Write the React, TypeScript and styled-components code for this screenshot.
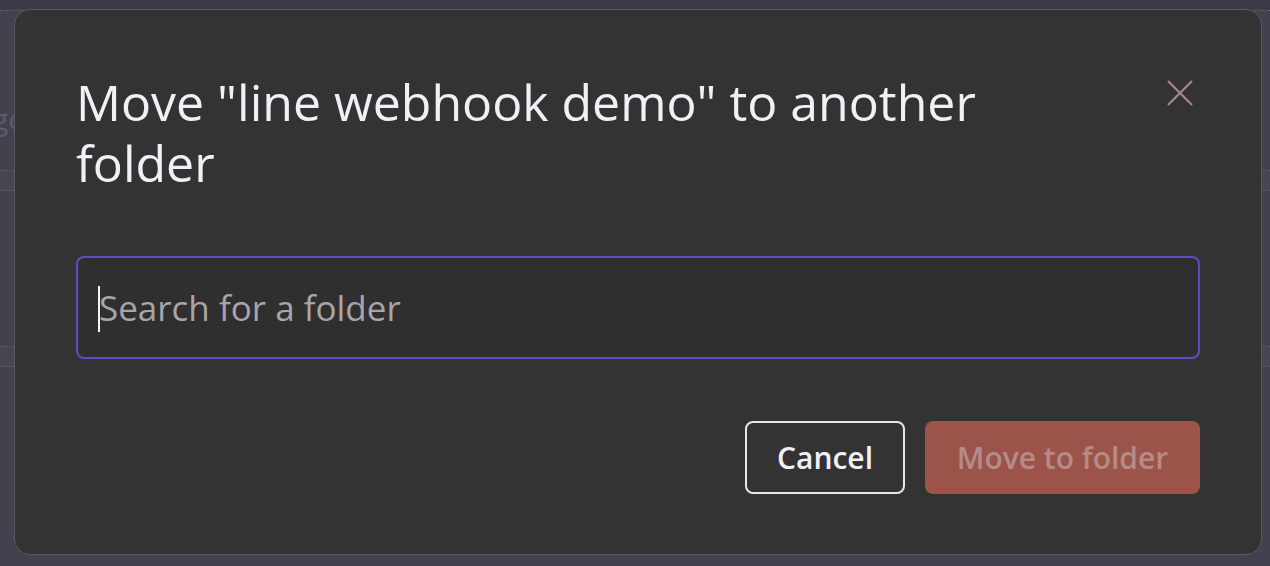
import React from "react";
import styled, { createGlobalStyle } from "styled-components";

const GlobalStyle = createGlobalStyle`
  html, body {
    margin: 0;
    padding: 0;
    width: 100%;
    height: 100%;
    overflow: hidden;
    background: #44414e;
  }
  body {
    font-family: "Open Sans", "Noto Sans", sans-serif;
  }
  * { box-sizing: border-box; }
`;

const Page = styled.div`
  width: 1270px;
  height: 566px;
  display: flex;
  flex-direction: column;
  background: #44414e;
`;

const TopStrip = styled.div`
  height: 11px;
  background: #3e3b48;
  border-bottom: 1px dotted #6a6777;
`;

const BgRow = styled.div<{ $h: number; $band?: boolean }>`
  height: ${(p) => p.$h}px;
  display: flex;
  align-items: center;
  background: ${(p) => (p.$band ? "#484553" : "transparent")};
  border-bottom: 1px dotted #65627a;
`;

const BgText = styled.span`
  margin-left: -8px;
  margin-top: 56px;
  font-size: 30px;
  color: #5d5a69;
`;

const Overlay = styled.div`
  position: fixed;
  inset: 0;
  display: flex;
  align-items: flex-start;
  justify-content: flex-start;
  padding: 9px 8px 11px 14px;
`;

const Modal = styled.div`
  width: 1248px;
  height: 546px;
  background: #333333;
  border: 1px solid #59595e;
  border-radius: 16px;
  padding: 62px 61px 60px 61px;
  display: flex;
  flex-direction: column;
`;

const Header = styled.div`
  display: flex;
  align-items: flex-start;
  justify-content: space-between;
  gap: 40px;
`;

const Title = styled.h2`
  margin: 0;
  font-family: "Open Sans", "Noto Sans", sans-serif;
  font-weight: 400;
  font-size: 50px;
  line-height: 61px;
  color: #f1f0f7;
  max-width: 960px;
`;

const CloseButton = styled.button`
  width: 40px;
  height: 40px;
  margin-top: 1px;
  flex: none;
  border: none;
  background: transparent;
  padding: 0;
  display: flex;
  align-items: center;
  justify-content: center;
  cursor: pointer;
`;

const SearchBox = styled.div`
  margin-top: 62px;
  height: 103px;
  border: 2px solid #5b4ec4;
  border-radius: 8px;
  background: #2f2f2f;
  display: flex;
  align-items: center;
  padding-left: 20px;
`;

const Caret = styled.span`
  width: 2px;
  height: 46px;
  background: #f4f4f4;
  margin-right: -1px;
  margin-top: 2px;
`;

const SearchInput = styled.input`
  flex: 1;
  border: none;
  outline: none;
  background: transparent;
  font-family: "Open Sans", "Noto Sans", sans-serif;
  font-size: 35px;
  color: #f1f0f7;
  padding: 0;
  &::placeholder {
    color: #a9a4aa;
  }
`;

const Footer = styled.div`
  margin-top: 62px;
  display: flex;
  justify-content: flex-end;
  gap: 20px;
`;

const Button = styled.button<{ $primary?: boolean }>`
  height: 73px;
  padding: 0;
  border-radius: 8px;
  font-family: "Open Sans", "Noto Sans", sans-serif;
  font-weight: 600;
  font-size: 30px;
  border: ${(p) => (p.$primary ? "none" : "2px solid #e6e5ee")};
  background: ${(p) => (p.$primary ? "#9c534a" : "transparent")};
  color: ${(p) => (p.$primary ? "#b58b88" : "#f1f0f7")};
  width: ${(p) => (p.$primary ? "275px" : "160px")};
  cursor: pointer;
`;

export default function App() {
  return (
    <>
      <GlobalStyle />
      <Page>
        <TopStrip />
        <BgRow $h={160}>
          <BgText>go</BgText>
        </BgRow>
        <BgRow $h={20} $band />
        <BgRow $h={156} />
        <BgRow $h={20} $band />
      </Page>
      <Overlay>
        <Modal role="dialog">
          <Header>
            <Title>Move "line webhook demo" to another folder</Title>
            <CloseButton aria-label="Close">
              <svg width="26" height="26" viewBox="0 0 26 26">
                <path
                  d="M1 1 L25 25 M25 1 L1 25"
                  stroke="#a58787"
                  strokeWidth="2.2"
                  strokeLinecap="butt"
                  fill="none"
                />
              </svg>
            </CloseButton>
          </Header>
          <SearchBox>
            <Caret />
            <SearchInput placeholder="Search for a folder" />
          </SearchBox>
          <Footer>
            <Button>Cancel</Button>
            <Button $primary>Move to folder</Button>
          </Footer>
        </Modal>
      </Overlay>
    </>
  );
}
